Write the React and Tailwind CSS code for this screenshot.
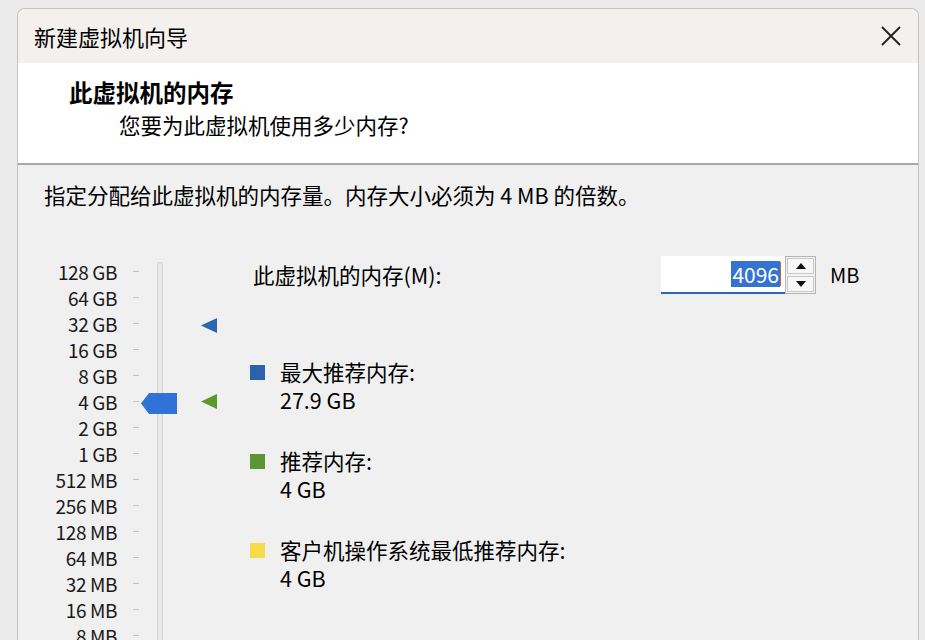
import React from 'react';

const scale = ['128 GB', '64 GB', '32 GB', '16 GB', '8 GB', '4 GB', '2 GB', '1 GB', '512 MB', '256 MB', '128 MB', '64 MB', '32 MB', '16 MB', '8 MB'];

const legend = [
  { color: 'bg-[#2b63aa]', label: '最大推荐内存:', value: '27.9 GB' },
  { color: 'bg-[#5b9632]', label: '推荐内存:', value: '4 GB' },
  { color: 'bg-[#f6dc4a]', label: '客户机操作系统最低推荐内存:', value: '4 GB' },
];

function Marker({ color }) {
  return (
    <svg width="16" height="15" viewBox="0 0 16 15">
      <polygon points="0,7.5 16,0 16,15" fill={color} />
    </svg>
  );
}

export default function App() {
  return (
    <div
      className="h-[640px] w-[925px] overflow-hidden bg-[#ebebeb] pt-[8px] pl-[17px] pr-[6px] text-black"
      style={{ fontFamily: '"Noto Sans CJK SC", "Noto Sans", sans-serif' }}
    >
      <div className="flex h-[700px] flex-col overflow-hidden rounded-t-[8px] border border-b-0 border-[#c2c2c2] bg-[#f0f0f0]">
        {/* title bar */}
        <div className="flex h-[54px] shrink-0 items-center justify-between bg-[#f4f0ed] pl-[16px] pr-[16px]">
          <span className="text-[22px] leading-none">新建虚拟机向导</span>
          <svg width="22" height="22" viewBox="0 0 22 22">
            <path d="M2 2 L20 20 M20 2 L2 20" stroke="#1f1f1f" strokeWidth="1.8" />
          </svg>
        </div>

        {/* header */}
        <div className="h-[102px] shrink-0 border-b-2 border-[#a9a9a9] bg-white pl-[51px] pt-[14px]">
          <div className="text-[23.5px] font-bold leading-[30px]">此虚拟机的内存</div>
          <div className="mt-[3px] pl-[50px] text-[21.5px] leading-[30px]">您要为此虚拟机使用多少内存?</div>
        </div>

        {/* body */}
        <div className="pl-[26px] pt-[15px]">
          <div className="text-[21.5px] leading-[30px]">指定分配给此虚拟机的内存量。内存大小必须为 4 MB 的倍数。</div>

          <div className="mt-[48px] flex">
            {/* scale labels */}
            <div className="flex w-[73px] flex-col">
              {scale.map((s) => (
                <div key={s} className="flex h-[26px] items-center justify-end text-[19px] leading-none tracking-[-0.4px] text-[#1a1a1a]">
                  {s}
                </div>
              ))}
            </div>
            {/* ticks */}
            <div className="flex w-[25px] flex-col pl-[16px]">
              {scale.map((s) => (
                <div key={s} className="flex h-[26px] items-center">
                  <div className="h-px w-[6px] bg-[#c4c4c4]" />
                </div>
              ))}
            </div>
            {/* track */}
            <div className="relative ml-[15px] mt-[4px] h-[400px] w-[6px] rounded-t-[2px] border border-[#d4d4d4] bg-[#e9e9e9]">
              <svg className="absolute left-[-17px] top-[130px]" width="36" height="21" viewBox="0 0 36 21">
                <polygon points="0,10.5 8,0 36,0 36,21 8,21" fill="#3172d6" />
              </svg>
            </div>
            {/* markers */}
            <div className="ml-[38px] flex w-[16px] flex-col">
              <div className="h-[27px]" />
              <div className="h-[27px]" />
              <div className="flex h-[26px] items-center"><Marker color="#2a66b2" /></div>
              <div className="h-[25px]" />
              <div className="h-[25px]" />
              <div className="flex h-[26px] items-center"><Marker color="#5a9a2c" /></div>
            </div>

            {/* right content */}
            <div className="ml-[33px] flex flex-col">
              <div className="mt-[-2px] flex h-[38px] items-center">
                <div className="w-[411px] pl-[3px] text-[21.5px] leading-none">此虚拟机的内存(M):</div>
                <div className="flex h-[38px] w-[124px] items-center justify-end border-b-2 border-[#2f62b8] bg-white pr-[4px]">
                  <span className="bg-[#3573d3] px-[1px] text-[21px] leading-[26px] text-white">4096</span>
                  <span className="h-[24px] w-px bg-[#c46a2a]" />
                </div>
                <div className="flex h-[38px] w-[31px] flex-col gap-[2px] border border-[#b5b5b5] bg-[#f3f3f3] p-[1px]">
                  <div className="flex flex-1 items-center justify-center border border-[#c8c8c8] bg-[#f7f7f7]">
                    <svg width="10" height="6" viewBox="0 0 10 6"><polygon points="5,0 10,6 0,6" fill="#111" /></svg>
                  </div>
                  <div className="flex flex-1 items-center justify-center border border-[#c8c8c8] bg-[#f7f7f7]">
                    <svg width="10" height="6" viewBox="0 0 10 6"><polygon points="0,0 10,0 5,6" fill="#111" /></svg>
                  </div>
                </div>
                <span className="ml-[14px] text-[20px] leading-none">MB</span>
              </div>

              <div className="mt-[64px] flex flex-col gap-[33px]">
                {legend.map((l) => (
                  <div key={l.label} className="flex">
                    <div className={`mt-[7px] h-[15px] w-[15px] ${l.color}`} />
                    <div className="ml-[15px] text-[21.5px] leading-[28px]">
                      <div>{l.label}</div>
                      <div>{l.value}</div>
                    </div>
                  </div>
                ))}
              </div>
            </div>
          </div>
        </div>
      </div>
    </div>
  );
}
